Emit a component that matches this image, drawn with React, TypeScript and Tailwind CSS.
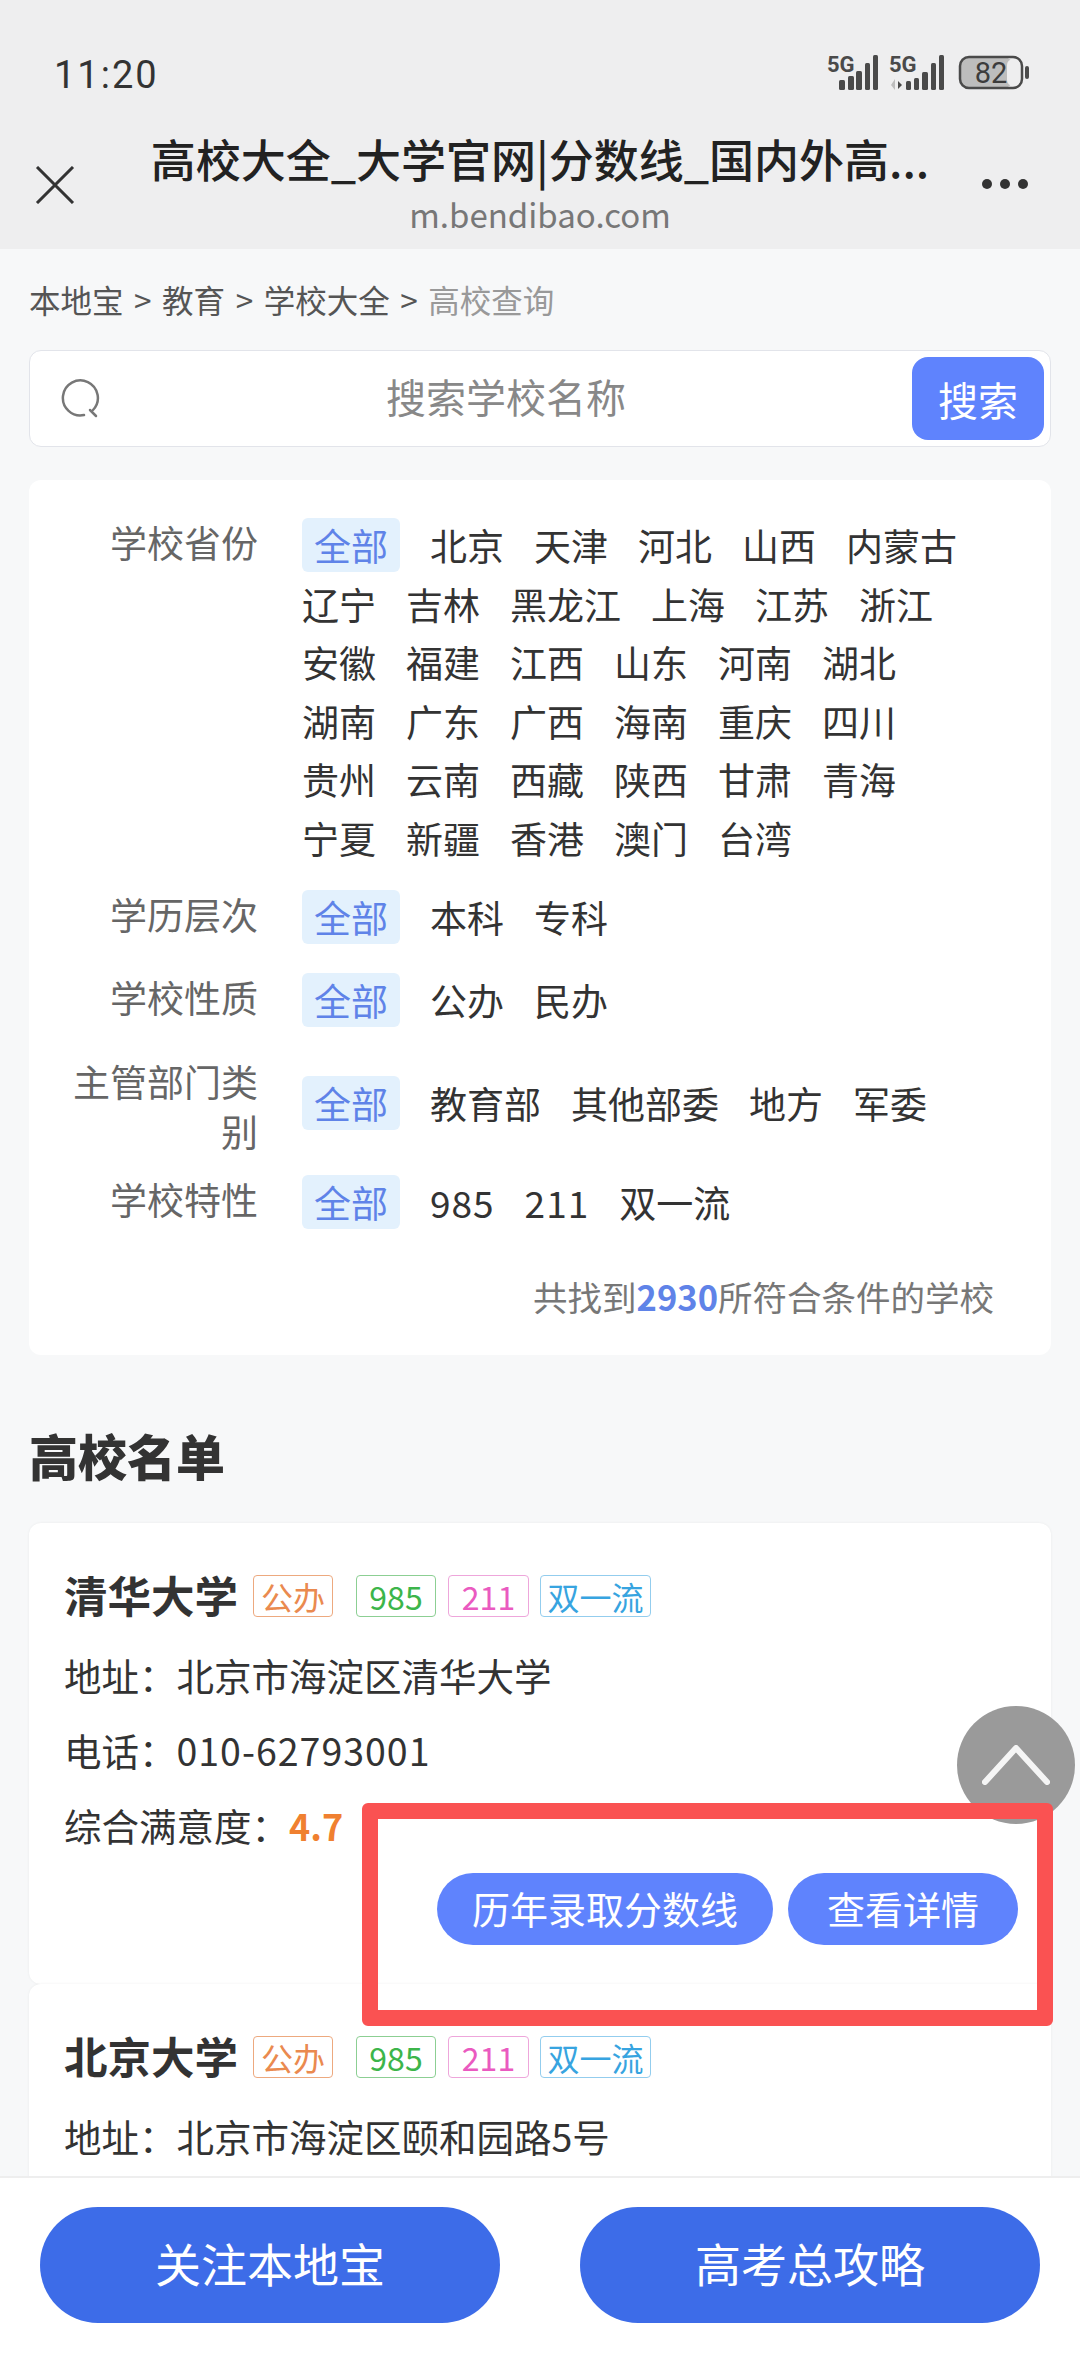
import React from 'react';

const provinces = [
  '北京', '天津', '河北', '山西', '内蒙古',
  '辽宁', '吉林', '黑龙江', '上海', '江苏', '浙江',
  '安徽', '福建', '江西', '山东', '河南', '湖北',
  '湖南', '广东', '广西', '海南', '重庆', '四川',
  '贵州', '云南', '西藏', '陕西', '甘肃', '青海',
  '宁夏', '新疆', '香港', '澳门', '台湾',
];

const AllTag = () => (
  <span className="h-[54px] w-[98px] flex items-center justify-center rounded-[6px] bg-[#e3f1fd] text-[#5f83e8]">全部</span>
);

const Options = ({ items }: { items: string[] }) => (
  <div className="flex-1 pr-[70px] flex flex-wrap items-center gap-x-[30px] gap-y-[4.5px] leading-[54px] text-[#333]">
    <AllTag />
    {items.map((item) => (
      <span key={item} className={/\d/.test(item) ? 'tracking-[1px]' : ''}>{item}</span>
    ))}
  </div>
);

const Label = ({ children }: { children: React.ReactNode }) => (
  <div className="w-[229px] shrink-0 mr-[44px] -mt-[3px] text-right text-[#666]">{children}</div>
);

const Badge = ({ text, className }: { text: string; className: string }) => (
  <span className={`h-[42px] flex items-center justify-center rounded-[4px] border text-[32px] leading-none ${className}`}>{text}</span>
);

const SchoolCard = ({ name, address, children }: { name: string; address: string; children?: React.ReactNode }) => (
  <div className="rounded-[12px] bg-white pl-[35px] pr-[36px] pt-[52px] shadow-[0_0_3px_rgba(0,0,0,0.06)]">
    <div className="flex items-center h-[42px]">
      <span className="w-[189px] text-[43.5px] font-bold text-[#333] leading-none -mt-[2px]">{name}</span>
      <Badge text="公办" className="w-[80px] mr-[23px] border-[#eda97f] text-[#ea8a4f]" />
      <Badge text="985" className="w-[80px] mr-[12px] border-[#8ccf93] text-[#3cb54a]" />
      <Badge text="211" className="w-[81px] mr-[11px] border-[#eea6db] text-[#ea5ac0]" />
      <Badge text="双一流" className="w-[111px] border-[#93cdee] text-[#37a4e0]" />
    </div>
    <div className="mt-[28px] h-[60px] text-[37.5px] leading-[60px] text-[#333]">地址：{address}</div>
    {children}
  </div>
);

export default function App() {
  return (
    <div className="relative h-[2363px] w-[1080px] overflow-hidden bg-[#f7f8f9] font-['Noto_Sans_CJK_SC',sans-serif]">
      <header className="h-[249px] bg-[#eeeeef]">
        <div className="flex justify-between items-start pt-[45px] pl-[54px] pr-[52px] h-[120px]">
          <span className="mt-[10px] text-[38px] leading-[40px] text-[#333] tracking-[2px] font-['Roboto',sans-serif]">11:20</span>
          <svg width="202" height="50" viewBox="0 -10 202 50" className="-mr-[1px]">
            <g fill="#4a4a4a">
              <text x="0" y="17" fontSize="22" fontWeight="700" fontFamily="Roboto, sans-serif">5G</text>
              <rect x="12" y="25" width="6" height="10" rx="1.5" />
              <rect x="21" y="21" width="6" height="14" rx="1.5" />
              <rect x="29" y="16" width="6" height="19" rx="1.5" />
              <rect x="38" y="8" width="5" height="27" rx="1.5" />
              <rect x="46" y="0" width="5" height="35" rx="1.5" />
              <text x="62" y="17" fontSize="22" fontWeight="700" fontFamily="Roboto, sans-serif">5G</text>
              <rect x="79" y="26" width="5" height="9" rx="1.5" />
              <rect x="87" y="23" width="5" height="12" rx="1.5" />
              <rect x="95" y="17" width="6" height="18" rx="1.5" />
              <rect x="104" y="8" width="5" height="27" rx="1.5" />
              <rect x="112" y="0" width="5" height="35" rx="1.5" />
              <path d="M71 26l4 4-4 4z" />
              <path d="M68 24v11l-4-5z" fill="#bdbdbd" />
              <rect x="133" y="2" width="52" height="31" rx="8" fill="#bdbdbd" />
              <rect x="133" y="2" width="62" height="31" rx="9" fill="none" stroke="#4a4a4a" strokeWidth="2.5" />
              <rect x="198" y="11" width="4" height="13" rx="2" />
            </g>
            <rect x="180" y="4" width="13" height="27" rx="6" fill="#eeeeef" />
            <text x="164" y="28" textAnchor="middle" fontSize="29" fill="#3c3c3c" fontFamily="Roboto, sans-serif">82</text>
          </svg>
        </div>
        <div className="relative h-[129px] flex flex-col items-center">
          <div className="mt-[14px] text-[45px] leading-[50px] font-medium text-[#222]">高校大全_大学官网|分数线_国内外高...</div>
          <div className="mt-[11px] text-[33px] leading-[38px] text-[#777]">m.bendibao.com</div>
          <svg width="40" height="38" viewBox="0 0 40 38" className="absolute left-[35px] top-[46px]">
            <path d="M2 1l36 36M38 1L2 37" stroke="#333" strokeWidth="3" fill="none" />
          </svg>
          <svg width="48" height="12" viewBox="0 0 48 12" className="absolute left-[981px] top-[58px]">
            <circle cx="6" cy="6" r="5" fill="#333" />
            <circle cx="24" cy="6" r="5" fill="#333" />
            <circle cx="42" cy="6" r="5" fill="#333" />
          </svg>
        </div>
      </header>

      <main className="px-[29px]">
        <div className="mt-[32px] h-[36px] text-[31.5px] leading-[36px] text-[#555] [word-spacing:3.5px]">
          本地宝 &gt; 教育 &gt; 学校大全 &gt; <span className="text-[#999]">高校查询</span>
        </div>

        <div className="mt-[33px] h-[97px] flex items-center rounded-[12px] border border-[#e2e4ea] bg-white pl-[30px] pr-[6px]">
          <svg width="40" height="40" viewBox="0 0 40 40" fill="none" stroke="#777" strokeWidth="2.5" strokeLinecap="round">
            <path d="M33 31A17.5 17.5 0 1 0 24 36" />
            <path d="M30 31l6 6" />
          </svg>
          <div className="flex-1 -mt-[5px] text-center text-[40px] text-[#888]">搜索学校名称</div>
          <button className="h-[83px] w-[132px] rounded-[16px] bg-[#5f83fd] text-[40px] text-white">搜索</button>
        </div>

        <section className="mt-[33px] h-[875px] rounded-[12px] bg-white pt-[38px] text-[37px] leading-[54px]">
          <div className="flex">
            <Label>学校省份</Label>
            <Options items={provinces} />
          </div>
          <div className="mt-[25px] flex">
            <Label>学历层次</Label>
            <Options items={['本科', '专科']} />
          </div>
          <div className="mt-[29px] flex">
            <Label>学校性质</Label>
            <Options items={['公办', '民办']} />
          </div>
          <div className="mt-[29px] flex items-center">
            <Label>
              <div className="leading-[50px] mt-[3px]">主管部门类<br />别</div>
            </Label>
            <div className="flex-1 -mt-[6px]">
              <Options items={['教育部', '其他部委', '地方', '军委']} />
            </div>
          </div>
          <div className="mt-[19px] flex">
            <Label>学校特性</Label>
            <Options items={['985', '211', '双一流']} />
          </div>
          <div className="mt-[42px] pr-[57px] text-right text-[34.5px] leading-[50px] text-[#777]">
            共找到<span className="font-bold text-[#5f83e8]">2930</span>所符合条件的学校
          </div>
        </section>

        <h2 className="mt-[70px] text-[49px] font-black leading-[60px] text-[#333]">高校名单</h2>

        <div className="mt-[38px]">
          <SchoolCard name="清华大学" address="北京市海淀区清华大学">
            <div className="mt-[15px] h-[60px] text-[37.5px] leading-[60px] text-[#333]">
              电话：<span className="tracking-[1px]">010-62793001</span>
            </div>
            <div className="mt-[15px] h-[60px] text-[37.5px] leading-[60px] text-[#333]">
              综合满意度：<span className="font-bold text-[36px] text-[#f08030]">4.7</span>
            </div>
            <div className="mt-[18px] pb-[39px] flex justify-end gap-[15px] -mr-[3px] text-[38px] text-white">
              <button className="h-[72px] w-[336px] rounded-full bg-[#5f83fd] pb-[4px]">历年录取分数线</button>
              <button className="h-[72px] w-[230px] rounded-full bg-[#5f83fd] pb-[4px]">查看详情</button>
            </div>
          </SchoolCard>
          <SchoolCard name="北京大学" address="北京市海淀区颐和园路5号">
            <div className="h-[120px]" />
          </SchoolCard>
        </div>
      </main>

      {/* floating back-to-top */}
      <div className="absolute left-[957px] top-[1706px] h-[118px] w-[118px] rounded-full bg-[#9a9a9a] flex items-center justify-center">
        <svg width="68" height="40" viewBox="0 0 68 40" fill="none" stroke="#fff" strokeWidth="6" strokeLinecap="round" strokeLinejoin="round" className="opacity-90">
          <path d="M3 37L34 3l31 34" />
        </svg>
      </div>

      {/* red annotation frame */}
      <div className="absolute left-[362px] top-[1803px] h-[223px] w-[691px] rounded-[6px] border-[16px] border-[#fa5252]" />

      <div className="absolute inset-x-0 bottom-0 h-[187px] border-t-2 border-[#eeeeee] bg-white flex justify-between px-[40px] pt-[29px] text-[46px] text-white">
        <button className="h-[116px] w-[460px] rounded-full bg-[#3d6ce8] pb-[6px]">关注本地宝</button>
        <button className="h-[116px] w-[460px] rounded-full bg-[#3d6ce8] pb-[6px]">高考总攻略</button>
      </div>
    </div>
  );
}
